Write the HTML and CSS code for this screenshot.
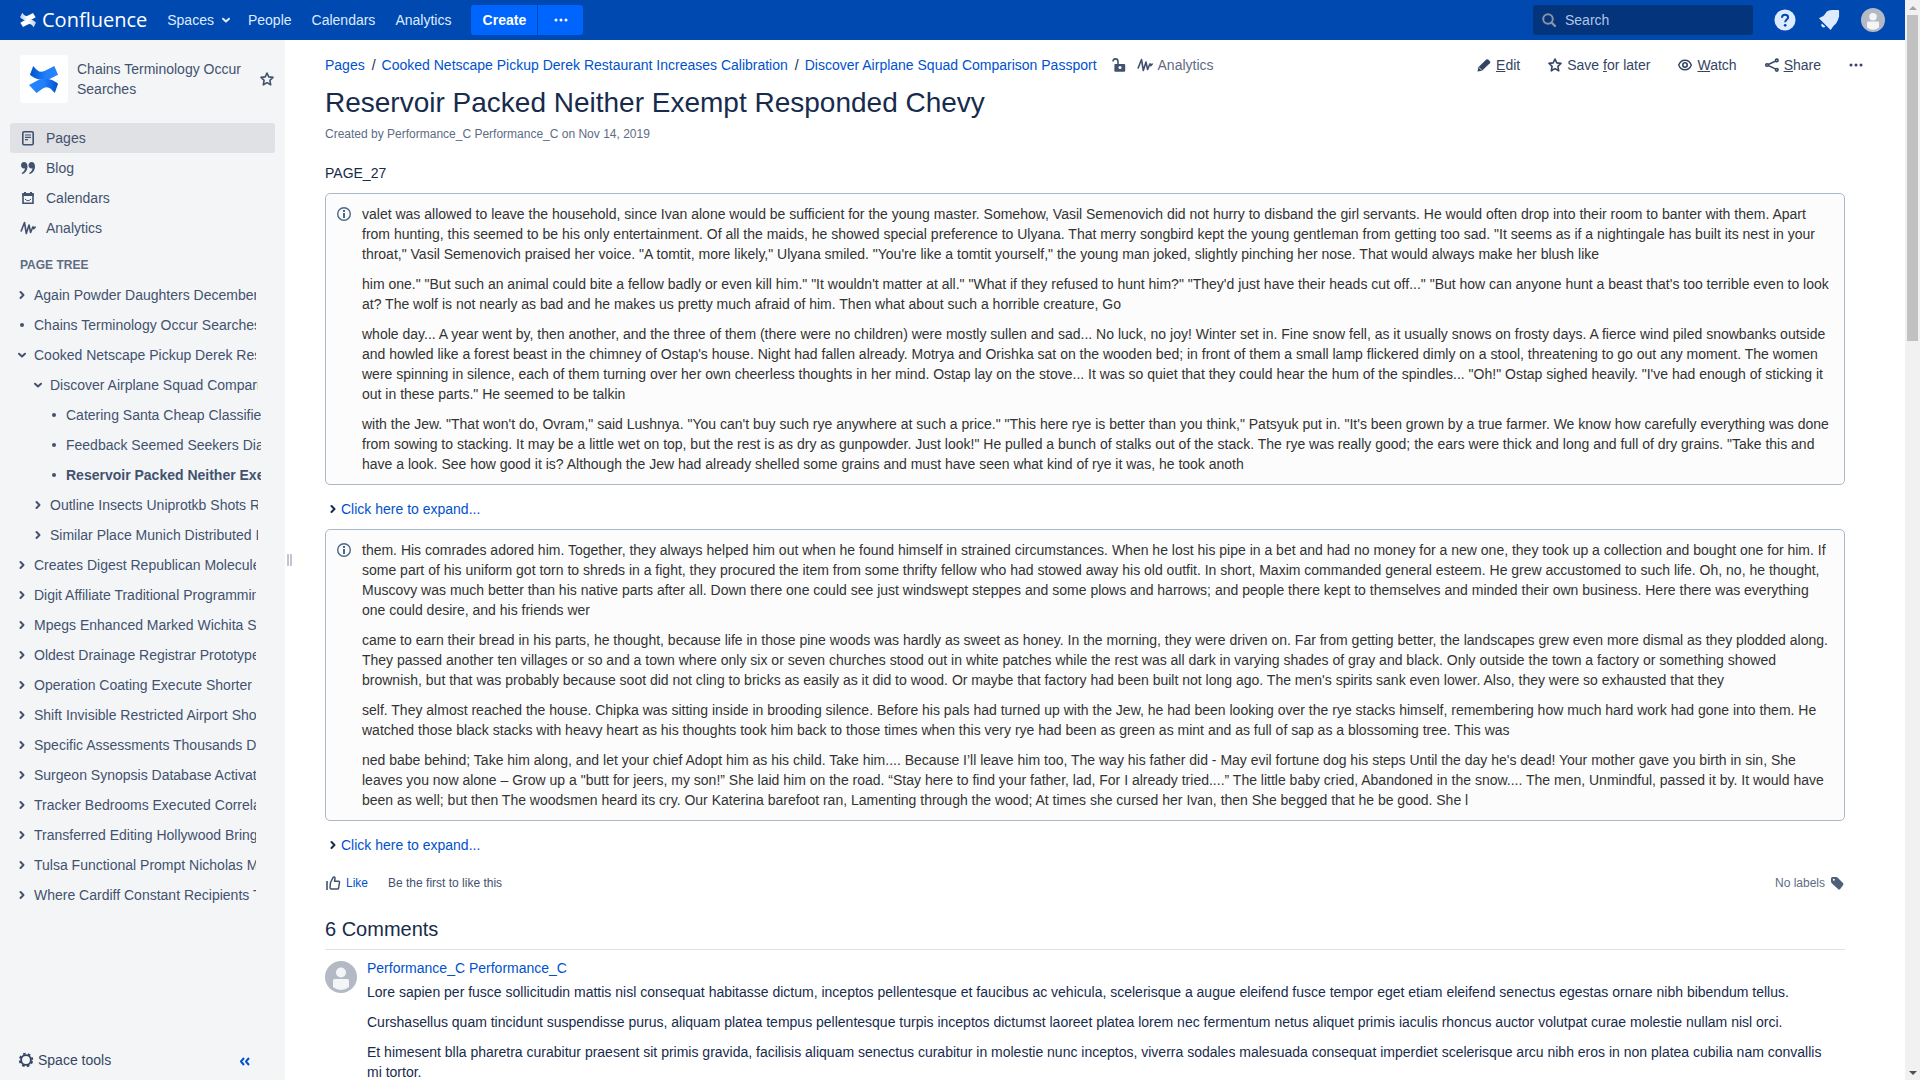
FILE: index.html
```html
<!DOCTYPE html>
<html lang="en">
<head>
<meta charset="utf-8">
<title>Reservoir Packed Neither Exempt Responded Chevy - Confluence</title>
<link rel="stylesheet" href="styles.css">
</head>
<body>
<svg class="sprite" aria-hidden="true">
  <defs>
    <linearGradient id="blue-top" x1="1" y1="0" x2="0" y2="0"><stop offset="0" stop-color="#2684ff"/><stop offset=".4" stop-color="#2380fb"/><stop offset="1" stop-color="#0052cc"/></linearGradient>
    <linearGradient id="blue-bottom" x1="0" y1="0" x2="1" y2="0"><stop offset="0" stop-color="#2684ff"/><stop offset=".5" stop-color="#2380fb"/><stop offset="1" stop-color="#0052cc"/></linearGradient>
    <linearGradient id="white-top" x1="1" y1="0" x2="0" y2="0"><stop offset=".5" stop-color="#fff"/><stop offset="1" stop-color="#b5cbe8"/></linearGradient>
    <linearGradient id="white-bottom" x1="0" y1="0" x2="1" y2="0"><stop offset=".5" stop-color="#fff"/><stop offset="1" stop-color="#b5cbe8"/></linearGradient>
  </defs>
  <symbol id="right" viewBox="0 0 16 16"><path d="M6.500 5 9.500 8l-3 3" fill="none" stroke="currentColor" stroke-width="2" stroke-linecap="round" stroke-linejoin="round"/></symbol>
  <symbol id="down" viewBox="0 0 16 16"><path d="M5 6.800 8 9.600l3-2.800" fill="none" stroke="currentColor" stroke-width="2" stroke-linecap="round" stroke-linejoin="round"/></symbol>
  <symbol id="bullet" viewBox="0 0 16 16"><circle cx="8" cy="8" r="2" fill="currentColor"/></symbol>
  <symbol id="dots" viewBox="0 0 16 16"><g fill="currentColor"><circle cx="3" cy="8" r="1.500"/><circle cx="8" cy="8" r="1.500"/><circle cx="13" cy="8" r="1.500"/></g></symbol>
  <symbol id="star" viewBox="0 0 16 16"><path d="m8 2 1.800 3.900 4.200.5-3.100 2.900.8 4.500L8 11.600l-3.700 2.200.8-4.500L2 6.400l4.200-.5z" fill="none" stroke="currentColor" stroke-width="1.600" stroke-linejoin="round"/></symbol>
  <symbol id="pulse" viewBox="0 0 16 16"><path d="M1.200 11 4.500 2.500l1.800 11L9 5l1.600 7.500L13 6.800l.8 1.800L15.200 7" fill="none" stroke="currentColor" stroke-width="1.600" stroke-linecap="round" stroke-linejoin="round"/></symbol>
  <symbol id="info" viewBox="0 0 16 16"><circle cx="8" cy="8" r="6.300" fill="none" stroke="currentColor" stroke-width="1.400"/><path d="M7 7h2v5H7zM7 4h2v2H7z" fill="currentColor"/></symbol>
  <symbol id="person" viewBox="0 0 32 32"><circle cx="16" cy="16" r="16" fill="#b3bac5"/><circle cx="16" cy="11.500" r="5" fill="#f4f5f7"/><path d="M8 19.500q0-1.500 1.500-1.500h13q1.500 0 1.500 1.500V26q-3.500 3-8 3t-8-3z" fill="#f4f5f7"/></symbol>
</svg>

<div class="window">
  <div class="app">
    <header class="topbar">
      <a class="brand" href="#">
        <svg class="brand-mark" viewBox="0 0 24 24"><path d="M3.500 1C7 6 9 7 13 5l6.500-3.500L23.500 8 17 11.500C9 15 4 12 0 8z" fill="url(#white-top)"/><path d="M20.500 23C17 18 15 17 11 19l-6.500 3.500L.5 16 7 12.500c8-3.500 13-.5 17 3.500z" fill="url(#white-bottom)"/></svg>
        <span>Confluence</span>
      </a>
      <nav class="topnav">
        <a href="#">Spaces <svg class="icon"><use href="#down"/></svg></a>
        <a href="#">People</a>
        <a href="#">Calendars</a>
        <a href="#">Analytics</a>
      </nav>
      <div class="create-group">
        <button class="create" type="button">Create</button>
        <button class="create-more" type="button" aria-label="Create from template"><svg class="icon"><use href="#dots"/></svg></button>
      </div>
      <label class="search">
        <svg class="icon" viewBox="0 0 16 16"><circle cx="7" cy="7" r="4.800" fill="none" stroke="currentColor" stroke-width="2"/><path d="m10.500 10.500 3.500 3.500" stroke="currentColor" stroke-width="2.400" stroke-linecap="round"/></svg>
        <input type="text" placeholder="Search" aria-label="Search">
      </label>
      <div class="tools">
        <button type="button" aria-label="Help"><svg class="tool" viewBox="0 0 24 24"><circle cx="12" cy="12" r="11.500" fill="#deebff"/><path d="M8.700 9.500C8.700 7.300 10 6.200 12 6.200s3.400 1.100 3.400 3c0 2.300-3.200 2.500-3.200 5.300" fill="none" stroke="#0049b0" stroke-width="2.200"/><circle cx="12.200" cy="17.800" r="1.500" fill="#0049b0"/></svg></button>
        <button type="button" aria-label="Notifications"><svg class="tool" viewBox="0 0 24 24"><path d="M1 10.200 5.800 7.600Q7.500 6 9.400 2.900 11.500 1.200 15 1h7q1 0 1 1v6.300q-1 4.500-3.300 7.400l-2.900 2.900-3 4.400z" fill="#deebff"/><path d="M4.200 15.800 8 19.200a2.400 2.400 0 1 1-3.800-3.400z" fill="#deebff"/></svg></button>
        <button type="button" aria-label="Profile"><svg class="me"><use href="#person"/></svg></button>
      </div>
    </header>

    <div class="body">
      <aside class="sidebar">
        <div class="space">
          <a class="space-logo" href="#" aria-label="Space home"><svg viewBox="0 0 32 32"><path d="M4.500 2C9 7 11 9.500 16.500 7.500L27 2l4 9.500L22 16C12.500 19 5 15 1 11.500z" fill="url(#blue-top)"/><path d="M27.500 31C23 26 21 23.500 15.500 25.500L8 31 0 22.500 10 17c9.500-3.500 17 .5 21 4z" fill="url(#blue-bottom)"/></svg></a>
          <a class="space-name" href="#">Chains Terminology Occur Searches</a>
          <button type="button" aria-label="Star space"><svg class="icon"><use href="#star"/></svg></button>
        </div>
        <nav class="sidenav">
          <a class="active" href="#"><svg class="icon" viewBox="0 0 16 16"><rect x="2.800" y="1.800" width="10.400" height="12.900" rx="1.200" fill="none" stroke="currentColor" stroke-width="1.600"/><path d="M5 5h6M5 7.300h6M5 9.600h3" stroke="currentColor" stroke-width="1.200"/></svg>Pages</a>
          <a href="#"><svg class="icon" viewBox="0 0 16 16"><g fill="currentColor"><path id="q" d="M4 2c2.300 0 3.500 1.800 3.500 4.500C7.500 10.500 5 13.500 2 14l-.3-.9C3.700 12 4.800 10.200 4.900 8.300 2.500 8.800 1 7.300 1 5.200 1 3.300 2.200 2 4 2z"/><use href="#q" x="7.500"/></g></svg>Blog</a>
          <a href="#"><svg class="icon" viewBox="0 0 16 16"><path d="M3 4h10v9.200H3z" fill="none" stroke="currentColor" stroke-width="1.600"/><path d="M2.200 3.200h11.600V6H2.200zM4 2h2v2H4zM10 2h2v2h-2z" fill="currentColor"/><path d="M5 9q3 3.500 6 0" fill="none" stroke="currentColor"/></svg>Calendars</a>
          <a href="#"><svg class="icon"><use href="#pulse"/></svg>Analytics</a>
        </nav>
        <h2 class="tree-title">PAGE TREE</h2>
        <ul class="tree">
          <li><svg class="icon"><use href="#right"/></svg><a href="#">Again Powder Daughters December</a></li>
          <li><svg class="icon"><use href="#bullet"/></svg><a href="#">Chains Terminology Occur Searches</a></li>
          <li><svg class="icon"><use href="#down"/></svg><a href="#">Cooked Netscape Pickup Derek Restaurant</a></li>
          <li class="level-2"><svg class="icon"><use href="#down"/></svg><a href="#">Discover Airplane Squad Comparison</a></li>
          <li class="level-3"><svg class="icon"><use href="#bullet"/></svg><a href="#">Catering Santa Cheap Classified</a></li>
          <li class="level-3"><svg class="icon"><use href="#bullet"/></svg><a href="#">Feedback Seemed Seekers Diamond</a></li>
          <li class="level-3 current"><svg class="icon"><use href="#bullet"/></svg><a href="#">Reservoir Packed Neither Exempt</a></li>
          <li class="level-2"><svg class="icon"><use href="#right"/></svg><a href="#">Outline Insects Uniprotkb Shots Real</a></li>
          <li class="level-2"><svg class="icon"><use href="#right"/></svg><a href="#">Similar Place Munich Distributed Is</a></li>
          <li><svg class="icon"><use href="#right"/></svg><a href="#">Creates Digest Republican Molecules</a></li>
          <li><svg class="icon"><use href="#right"/></svg><a href="#">Digit Affiliate Traditional Programming</a></li>
          <li><svg class="icon"><use href="#right"/></svg><a href="#">Mpegs Enhanced Marked Wichita Sun</a></li>
          <li><svg class="icon"><use href="#right"/></svg><a href="#">Oldest Drainage Registrar Prototypes</a></li>
          <li><svg class="icon"><use href="#right"/></svg><a href="#">Operation Coating Execute Shorter</a></li>
          <li><svg class="icon"><use href="#right"/></svg><a href="#">Shift Invisible Restricted Airport Shore</a></li>
          <li><svg class="icon"><use href="#right"/></svg><a href="#">Specific Assessments Thousands Days</a></li>
          <li><svg class="icon"><use href="#right"/></svg><a href="#">Surgeon Synopsis Database Activate</a></li>
          <li><svg class="icon"><use href="#right"/></svg><a href="#">Tracker Bedrooms Executed Correlate</a></li>
          <li><svg class="icon"><use href="#right"/></svg><a href="#">Transferred Editing Hollywood Brings</a></li>
          <li><svg class="icon"><use href="#right"/></svg><a href="#">Tulsa Functional Prompt Nicholas Man</a></li>
          <li><svg class="icon"><use href="#right"/></svg><a href="#">Where Cardiff Constant Recipients To</a></li>
        </ul>
        <div class="side-footer">
          <button type="button"><svg class="icon" viewBox="0 0 16 16"><circle cx="8" cy="8" r="4.900" fill="none" stroke="currentColor" stroke-width="1.900"/><circle cx="8" cy="8" r="6.300" fill="none" stroke="currentColor" stroke-width="1.800" stroke-dasharray="2.600 2.348" stroke-dashoffset="-1.200"/></svg>Space tools</button>
          <button class="collapse" type="button" aria-label="Collapse sidebar"><svg class="icon" viewBox="0 0 16 16"><path d="M7 6 4 9.500 7 13M12 6 9 9.500l3 3.500" fill="none" stroke="currentColor" stroke-width="2" stroke-linejoin="round"/></svg></button>
        </div>
      </aside>
      <div class="splitter"><span class="grip"></span></div>

      <main class="content">
        <div class="page-head">
          <nav class="crumbs">
            <a href="#">Pages</a><span class="slash">/</span><a href="#">Cooked Netscape Pickup Derek Restaurant Increases Calibration</a><span class="slash">/</span><a href="#">Discover Airplane Squad Comparison Passport</a>
            <svg class="icon lock" viewBox="0 0 16 16"><path d="M3.500 7h9.700q1 0 1 1v5.500q0 1.200-1 1.200h-8.700q-1.200 0-1.200-1.200z" fill="currentColor"/><path d="M2 4.500C2 1 6.800 1 7 4.200V8" fill="none" stroke="currentColor" stroke-width="1.600"/><circle cx="9" cy="10.600" r="1.500" fill="#fff"/></svg>
            <a class="stats" href="#"><svg class="icon"><use href="#pulse"/></svg>Analytics</a>
          </nav>
          <div class="actions">
            <a href="#"><svg class="icon" viewBox="0 0 16 16"><path d="m1.500 14.500.8-4.200 8-7.700q1-.8 1.900-.1l1.700 1.700q.8 1-.1 2L6 13.700z" fill="currentColor"/><path d="m2.700 10.200 3.200 3.200" stroke="#fff" stroke-width=".8"/></svg><span><u>E</u>dit</span></a>
            <a href="#"><svg class="icon"><use href="#star"/></svg><span>Save <u>f</u>or later</span></a>
            <a href="#"><svg class="icon" viewBox="0 0 16 16"><path d="M1.700 8C3 4.600 5.200 3.200 8 3.200S13 4.600 14.300 8C13 11.400 10.800 12.800 8 12.800S3 11.400 1.700 8z" fill="none" stroke="currentColor" stroke-width="1.400"/><circle cx="8" cy="8" r="2.200" fill="none" stroke="currentColor" stroke-width="1.600"/></svg><span><u>W</u>atch</span></a>
            <a href="#"><svg class="icon" viewBox="0 0 16 16"><path d="M13 3.500 3 8l10 4.700" fill="none" stroke="currentColor" stroke-width="1.400"/><g fill="#fff" stroke="currentColor" stroke-width="1.600"><circle cx="3" cy="8" r="1.300"/><circle cx="12.800" cy="3.400" r="1.300"/><circle cx="12.800" cy="12.800" r="1.300"/></g></svg><span><u>S</u>hare</span></a>
            <button type="button" aria-label="More actions"><svg class="icon"><use href="#dots"/></svg></button>
          </div>
        </div>

        <div class="page">
          <h1>Reservoir Packed Neither Exempt Responded Chevy</h1>
          <p class="meta">Created by Performance_C Performance_C on Nov 14, 2019</p>
          <p class="intro">PAGE_27</p>

          <section class="note">
            <svg class="icon"><use href="#info"/></svg>
            <div class="prose">
              <p>valet was allowed to leave the household, since Ivan alone would be sufficient for the young master. Somehow, Vasil Semenovich did not hurry to disband the girl servants. He would often drop into their room to banter with them. Apart from hunting, this seemed to be his only entertainment. Of all the maids, he showed special preference to Ulyana. That merry songbird kept the young gentleman from getting too sad. "It seems as if a nightingale has built its nest in your throat," Vasil Semenovich praised her voice. "A tomtit, more likely," Ulyana smiled. "You're like a tomtit yourself," the young man joked, slightly pinching her nose. That would always make her blush like</p>
              <p>him one." "But such an animal could bite a fellow badly or even kill him." "It wouldn't matter at all." "What if they refused to hunt him?" "They'd just have their heads cut off..." "But how can anyone hunt a beast that's too terrible even to look at? The wolf is not nearly as bad and he makes us pretty much afraid of him. Then what about such a horrible creature, Go</p>
              <p>whole day... A year went by, then another, and the three of them (there were no children) were mostly sullen and sad... No luck, no joy! Winter set in. Fine snow fell, as it usually snows on frosty days. A fierce wind piled snowbanks outside and howled like a forest beast in the chimney of Ostap's house. Night had fallen already. Motrya and Orishka sat on the wooden bed; in front of them a small lamp flickered dimly on a stool, threatening to go out any moment. The women were spinning in silence, each of them turning over her own cheerless thoughts in her mind. Ostap lay on the stove... It was so quiet that they could hear the hum of the spindles... "Oh!" Ostap sighed heavily. "I've had enough of sticking it out in these parts." He seemed to be talkin</p>
              <p>with the Jew. "That won't do, Ovram," said Lushnya. "You can't buy such rye anywhere at such a price." "This here rye is better than you think," Patsyuk put in. "It's been grown by a true farmer. We know how carefully everything was done from sowing to stacking. It may be a little wet on top, but the rest is as dry as gunpowder. Just look!" He pulled a bunch of stalks out of the stack. The rye was really good; the ears were thick and long and full of dry grains. "Take this and have a look. See how good it is? Although the Jew had already shelled some grains and must have seen what kind of rye it was, he took anoth</p>
            </div>
          </section>
          <button class="expander" type="button"><svg class="icon"><use href="#right"/></svg>Click here to expand...</button>

          <section class="note">
            <svg class="icon"><use href="#info"/></svg>
            <div class="prose">
              <p>them. His comrades adored him. Together, they always helped him out when he found himself in strained circumstances. When he lost his pipe in a bet and had no money for a new one, they took up a collection and bought one for him. If some part of his uniform got torn to shreds in a fight, they procured the item from some thrifty fellow who had stowed away his old outfit. In short, Maxim commanded general esteem. He grew accustomed to such life. Oh, no, he thought, Muscovy was much better than his native parts after all. Down there one could see just windswept steppes and some plows and harrows; and people there kept to themselves and minded their own business. Here there was everything one could desire, and his friends wer</p>
              <p>came to earn their bread in his parts, he thought, because life in those pine woods was hardly as sweet as honey. In the morning, they were driven on. Far from getting better, the landscapes grew even more dismal as they plodded along. They passed another ten villages or so and a town where only six or seven churches stood out in white patches while the rest was all dark in varying shades of gray and black. Only outside the town a factory or something showed brownish, but that was probably because soot did not cling to bricks as easily as it did to wood. Or maybe that factory had been built not long ago. The men's spirits sank even lower. Also, they were so exhausted that they</p>
              <p>self. They almost reached the house. Chipka was sitting inside in brooding silence. Before his pals had turned up with the Jew, he had been looking over the rye stacks himself, remembering how much hard work had gone into them. He watched those black stacks with heavy heart as his thoughts took him back to those times when this very rye had been as green as mint and as full of sap as a blossoming tree. This was</p>
              <p>ned babe behind; Take him along, and let your chief Adopt him as his child. Take him.... Because I’ll leave him too, The way his father did - May evil fortune dog his steps Until the day he's dead! Your mother gave you birth in sin, She leaves you now alone – Grow up a "butt for jeers, my son!” She laid him on the road. “Stay here to find your father, lad, For I already tried....” The little baby cried, Abandoned in the snow.... The men, Unmindful, passed it by. It would have been as well; but then The woodsmen heard its cry. Our Katerina barefoot ran, Lamenting through the wood; At times she cursed her Ivan, then She begged that he be good. She l</p>
            </div>
          </section>
          <button class="expander" type="button"><svg class="icon"><use href="#right"/></svg>Click here to expand...</button>

          <div class="reactions">
            <button class="like" type="button"><svg class="icon" viewBox="0 0 16 16"><path d="M5.500 7.500 8.300 2.200Q10 1.500 10 3.500L9.500 6.300h4.200q1 0 .8 1.200l-.9 5.500q-.2 1-1.200 1H6.500q-1.500 0-1.500-1.500z" fill="none" stroke="currentColor" stroke-width="1.500" stroke-linejoin="round"/><path d="M2 6v9" stroke="currentColor" stroke-width="1.600"/></svg>Like</button>
            <span>Be the first to like this</span>
            <span class="labels">No labels <svg class="icon" viewBox="0 0 16 16"><path d="M2 3.500Q2 2 3.500 2H7q1 0 2 1l5 5q1 1 0 2.200L11.200 14q-1.200 1-2.200 0L3 8.500Q2 7.500 2 6.500z" fill="currentColor"/><circle cx="4.800" cy="4.800" r="1" fill="#fff"/></svg></span>
          </div>

          <h2 class="comments-title">6 Comments</h2>
          <article class="comment">
            <svg class="avatar"><use href="#person"/></svg>
            <div>
              <a class="author" href="#">Performance_C Performance_C</a>
              <div class="prose">
                <p>Lore sapien per fusce sollicitudin mattis nisl consequat habitasse dictum, inceptos pellentesque et faucibus ac vehicula, scelerisque a augue eleifend fusce tempor eget etiam eleifend senectus egestas ornare nibh bibendum tellus.</p>
                <p>Curshasellus quam tincidunt suspendisse purus, aliquam platea tempus pellentesque turpis inceptos dictumst laoreet platea lorem nec fermentum netus aliquet primis iaculis rhoncus auctor volutpat curae molestie nullam nisl orci.</p>
                <p>Et himesent blla pharetra curabitur praesent sit primis gravida, facilisis aliquam senectus curabitur in molestie nunc inceptos, viverra sodales malesuada consequat imperdiet scelerisque arcu nibh eros in non platea cubilia nam convallis mi tortor.</p>
              </div>
            </div>
          </article>
        </div>
      </main>
    </div>
  </div>

  <div class="scrollbar" aria-hidden="true">
    <span class="arrow up"></span>
    <span class="track"><span class="thumb"></span></span>
    <span class="arrow down"></span>
  </div>
</div>
</body>
</html>
```
FILE: styles.css
```css
* { box-sizing: border-box; }

body {
  margin: 0;
  font: 14px/20px "Liberation Sans", Arial, sans-serif;
  color: #172b4d;
  background: #fff;
}

a { color: #0052cc; text-decoration: none; }
h1, h2, p, ul { margin: 0; padding: 0; }
h1, h2 { font-weight: normal; }

button {
  padding: 0;
  border: 0;
  background: none;
  color: inherit;
  font: inherit;
  cursor: pointer;
}

.sprite { position: absolute; width: 0; height: 0; }
.icon { display: block; flex: none; width: 16px; height: 16px; }

.window {
  display: grid;
  grid-template-columns: minmax(0, 1fr) 15px;
  height: 100vh;
  overflow: hidden;
}

.app { display: flex; flex-direction: column; min-height: 0; }

/* Top bar */
.topbar {
  display: flex;
  flex: none;
  align-items: center;
  height: 40px;
  padding: 0 20px;
  background: #0049b0;
  color: #deebff;
}

.brand {
  display: flex;
  align-items: center;
  gap: 6px;
  margin-right: 20px;
  color: #fff;
  font-family: "Open Sans", "Noto Sans", sans-serif;
  font-size: 20px;
}
.brand-mark { width: 16px; height: 16px; }

.topnav { display: flex; gap: 20px; }
.topnav a { display: flex; align-items: center; gap: 4px; color: #deebff; }
.topnav a:first-child { margin-right: -6px; }

.create-group { display: flex; gap: 1px; margin-left: 20px; }
.create-group button {
  display: grid;
  place-items: center;
  height: 30px;
  background: #0065ff;
  color: #fff;
  font-weight: bold;
}
.create { width: 66px; border-radius: 3px 0 0 3px; }
.create-more { width: 45px; border-radius: 0 3px 3px 0; }

.search {
  display: flex;
  align-items: center;
  gap: 8px;
  width: 220px;
  height: 30px;
  margin-left: auto;
  padding: 0 8px;
  border-radius: 3px;
  background: #04347c;
  color: #8993a4;
}
.search input {
  min-width: 0;
  padding: 0;
  border: 0;
  outline: 0;
  background: none;
  color: #deebff;
  font: inherit;
}
.search input::placeholder { color: #b0c5e6; opacity: 1; }

.tools { display: flex; align-items: center; gap: 20px; margin-left: 20px; }
.tools button { display: grid; place-items: center; width: 24px; height: 24px; }
.tool { width: 22px; height: 22px; }
.me { width: 24px; height: 24px; }

/* Page body */
.body {
  display: grid;
  flex: 1;
  grid-template-columns: 285px 10px minmax(0, 1fr);
  min-height: 0;
}

/* Sidebar */
.sidebar {
  display: flex;
  flex-direction: column;
  min-height: 0;
  padding: 15px 10px 10px;
  background: #f4f5f7;
  color: #42526e;
}
.sidebar a { color: #42526e; }

.space { display: flex; align-items: center; padding: 0 0 0 10px; }
.space-logo {
  display: grid;
  flex: none;
  place-items: center;
  width: 48px;
  height: 48px;
  border-radius: 3px;
  background: #fff;
}
.space-logo svg { width: 30px; height: 30px; }
.space-name { flex: 1; padding: 0 16px 0 9px; }

.sidenav { margin-top: 20px; }
.sidenav a {
  display: flex;
  align-items: center;
  gap: 10px;
  height: 30px;
  padding: 0 10px;
  border-radius: 3px;
}
.sidenav .active { background: #dfe1e5; }

.tree-title {
  margin: 12px 0 5px;
  padding-left: 10px;
  color: #5e6c84;
  font-size: 12px;
  font-weight: bold;
}

.tree { flex: 1; min-height: 0; overflow: hidden; list-style: none; }
.tree li {
  display: flex;
  align-items: center;
  gap: 4px;
  height: 30px;
  padding: 0 19px 0 4px;
}
.tree a { overflow: hidden; white-space: nowrap; }
.tree .level-2 { padding: 0 17px 0 20px; }
.tree .level-3 { padding: 0 14px 0 36px; }
.tree .current { font-weight: bold; }

.side-footer {
  display: flex;
  align-items: center;
  justify-content: space-between;
  padding: 0 22px 0 8px;
}
.side-footer button { display: flex; align-items: center; gap: 4px; color: #344563; }
.side-footer .collapse { color: #0052cc; }

.splitter { display: flex; align-items: center; padding-left: 2px; }
.grip {
  width: 5px;
  height: 12px;
  border: solid #c1c7d0;
  border-width: 0 2px;
}

/* Content */
.content { min-height: 0; padding: 15px 0 0 30px; overflow: hidden; }

.page-head { display: flex; justify-content: space-between; padding-right: 41px; }
.crumbs, .stats, .actions, .actions a { display: flex; align-items: center; }
.slash { padding: 0 6px 0 7px; }
.crumbs .lock { margin: 0 10px 0 14px; color: #42526e; }
.stats { gap: 5px; color: #5e6c84; }
.stats .icon { color: #42526e; }
.actions { gap: 27px; color: #344563; }
.actions a { gap: 4px; color: #344563; }

.page { padding-right: 60px; }
h1 { margin-top: 12px; font-size: 28px; line-height: 32px; }
.meta { margin-top: 5px; color: #5e6c84; font-size: 12px; }
.intro { margin: 19px 0 10px; }

.note {
  display: flex;
  gap: 10px;
  padding: 10px;
  border: 1px solid #aab8c6;
  border-radius: 5px;
  background: #fcfcfc;
  color: #333;
}
.note > .icon { margin-top: 2px; color: #4a6785; }
.prose p + p { margin-top: 10px; }

.expander {
  display: flex;
  align-items: center;
  height: 20px;
  margin: 14px 0 10px;
  color: #0052cc;
}
.expander .icon { color: #172b4d; }

.reactions {
  display: flex;
  align-items: center;
  margin-top: 18px;
  color: #42526e;
  font-size: 12px;
}
.like { display: flex; align-items: center; gap: 5px; margin-right: 20px; color: #0052cc; }
.like .icon { color: #42526e; }
.labels { display: flex; align-items: center; gap: 4px; margin-left: auto; color: #5e6c84; }
.labels .icon { color: #505f79; }

.comments-title {
  margin-top: 21px;
  padding-bottom: 5px;
  border-bottom: 1px solid #dfe1e5;
  font-size: 20px;
  line-height: 30px;
}
.comment { display: flex; gap: 10px; padding: 8px 10px 0 0; }
.avatar { flex: none; width: 32px; height: 32px; margin-top: 3px; }
.author { display: block; margin-bottom: 4px; }

/* Scrollbar */
.scrollbar { display: flex; flex-direction: column; background: #f1f1f1; }
.arrow {
  display: grid;
  flex: none;
  place-items: center;
  height: 15px;
}
.arrow::before { content: ""; border: 4px solid transparent; }
.up::before { border-top: 0; border-bottom-color: #a3a3a3; }
.down::before { border-bottom: 0; border-top-color: #505050; }
.track { flex: 1; padding: 0 2px; }
.thumb { display: block; height: 31%; background: #c1c1c1; }
```
